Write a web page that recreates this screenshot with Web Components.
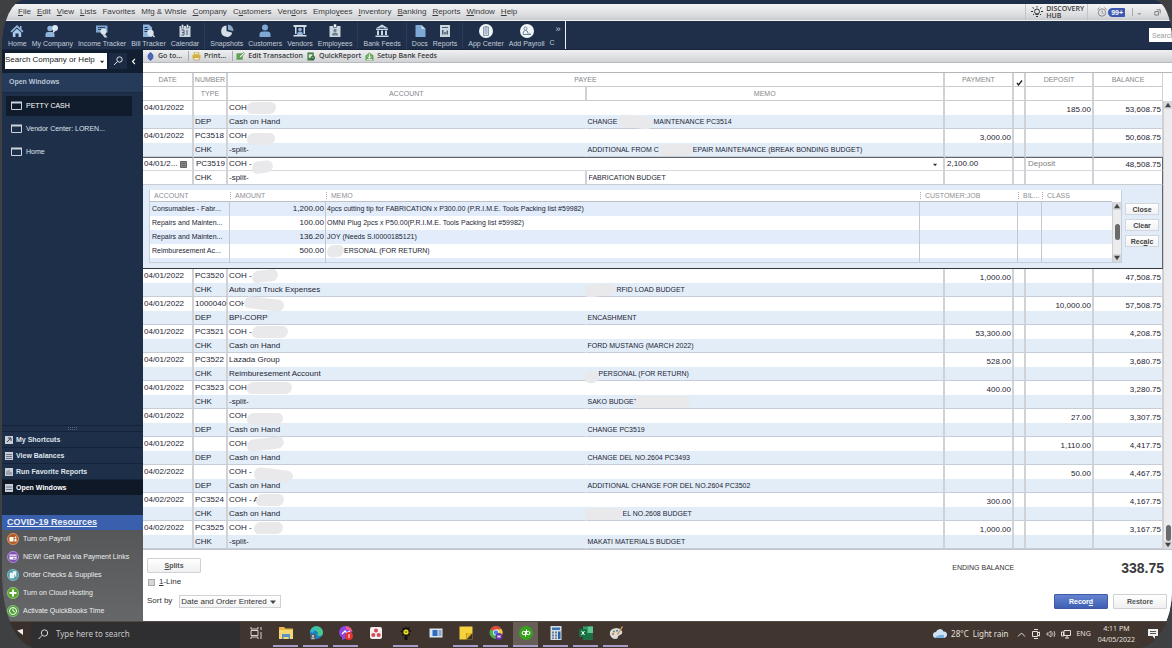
<!DOCTYPE html>
<html lang="en">
<head>
<meta charset="utf-8">
<title>Petty Cash Register</title>
<style>
html{height:100%}
body{margin:0;min-height:100%;display:flex;background:#3f4042;font-family:"Liberation Sans",Arial,sans-serif;font-size:8px;line-height:10px;color:#1c2433}
</style>
</head>
<body>
<desk-top></desk-top>
<script>
const RESET = `*{box-sizing:border-box}button,input,select{font:inherit;color:inherit;margin:0;padding:0;border:0;background:none;border-radius:0;min-width:0}a{color:inherit;text-decoration:none}svg{display:block;flex:none}`;
function define(name, css, html) {
  customElements.define(name, class extends HTMLElement {
    constructor() {
      super();
      const body = typeof html === 'function' ? html(this) : html;
      this.attachShadow({mode: 'open'}).innerHTML = `<style>${RESET}${css}</style>${body}`;
    }
  });
}

const svg = (body, size = 14, box = 14) => `<svg width="${size}" height="${size}" viewBox="0 0 ${box} ${box}" aria-hidden="true">${body}</svg>`;
const TOOLS = {
  home: '<path d="M7 1 0.5 7.2l1.2 1.2L7 3.6l5.300 4.800 1.200-1.200L11.500 5.300V2H10v1.800z" fill="#8fb4dc"/><path d="M2.800 8.500 7 4.800l4.200 3.700V13H8.500V9.500h-3V13H2.800z" fill="#a9c8e8"/>',
  company: '<circle cx="5" cy="4.500" r="2.700" fill="#8fb4dc"/><path d="M0.500 13V10q0-2 2.500-2h4q2.500 0 2.500 2v3z" fill="#8fb4dc"/><circle cx="10" cy="4" r="3" fill="#dbe7f2"/><path d="m8 6 0 3 2.500-2z" fill="#dbe7f2"/>',
  income: '<path d="M1 1.500h11.500v7H1z" fill="#7fa6d2"/><path d="M3 3h7v1H3zm0 2h5v1H3z" fill="#2c4668"/><circle cx="8.500" cy="7.500" r="3" fill="#dbe3ea"/><path d="m10 10 2.500 3.500H9.500L7 10z" fill="#c5d0da"/>',
  bill: '<path d="M2 0.500h6l3 3V13H2z" fill="#8fb4dc"/><path d="M3.500 3h3v1h-3zm0 2h4v1h-4zm0 2h3v1h-3z" fill="#23395a"/><circle cx="9.500" cy="9" r="3.200" fill="#dbe3ea"/><path d="m11.500 11 2 2" stroke="#dbe3ea" stroke-width="1.500"/>',
  calendar: '<path d="M1.500 2h11v11h-11z" fill="#cbd5dd"/><path d="M3.500.5h2V4h-2zm5 0h2V4h-2z" fill="#e8edf1" stroke="#23395a" stroke-width=".5"/><path d="M3.500 6H6v5H3.500M4 8.500h2M9 6v5" stroke="#4a5d74" fill="none"/>',
  pie: '<path d="M6.500 1.500a5.700 5.700 0 1 0 5.800 7.300L6.500 7z" fill="#d5dee6"/><path d="M8 0.500V5.800l5.200 1.400A5.700 5.700 0 0 0 8 .5z" fill="#8ba7c6"/>',
  person: '<circle cx="7" cy="3.500" r="3" fill="#7ea9d6"/><path d="M1.500 13V10.500Q1.500 7.500 5 7.500h4q3.500 0 3.500 3V13z" fill="#7ea9d6"/>',
  vendor: '<path d="M.5 1h13v2h-13zM2 3h1.500v7H2zm8.500 0H12v7h-1.500zM.5 11h13v1.500H.5z" fill="#d5dee6"/><circle cx="7" cy="5.500" r="1.800" fill="#8fb4dc"/><path d="M4 11q0-3.500 3-3.500t3 3.500z" fill="#8fb4dc"/>',
  badge: '<path d="M1.500 2h11v11h-11z" fill="#cbd5dd"/><path d="M5.500 0h3v3.500h-3z" fill="#eef2f5" stroke="#23395a" stroke-width=".6"/><circle cx="7" cy="6.500" r="1.700" fill="#6e8096"/><path d="M4 11.500q0-3 3-3t3 3z" fill="#6e8096"/>',
  bank: '<path d="M7 0.500 13.500 4.500H.5zM1 5h12v1H1zM2 6.500h2V11H2zm4 0h2V11H6zm4 0h2V11h-2zM.5 11.500h13V13H.5z" fill="#c8d7e6"/><path d="M5 3.500h4v1H5z" fill="#23395a"/>',
  doc: '<path d="M2.500 1h6l4 4v8h-10z" fill="#7ea9d6"/><path d="M8.500 1v4h4z" fill="#c8daee"/>',
  report: '<path d="M2 1h10v12H2z" fill="#cbd5dd"/><path d="M4 3h6v1H4zm0 3h1.500v4.500H4zm2.300 2h1.500v2.500H6.300zM8.500 6.500H10v4H8.500z" fill="#4a5d74"/>',
  app: '<circle cx="7" cy="7" r="7" fill="#f1f5f8"/><path d="M4.500 3h5v8.500h-5z" fill="#d3dde7" stroke="#6d87a1" stroke-width=".8"/><path d="M5.500 5h3m-3 2h3m-3 2h3M6 2.500h2" stroke="#6d87a1" stroke-width=".8"/>',
  payroll: '<circle cx="7" cy="7" r="7" fill="#f1f5f8"/><circle cx="5.500" cy="4.500" r="1.500" fill="none" stroke="#6d87a1"/><path d="M3 10q0-3.500 2.500-3.500T8 9M7 10h4M3 10.500h8" stroke="#6d87a1" fill="none"/>'
};

define('menu-bar', `
:host{display:flex;align-items:center;height:17px;padding:0 10px 0 16px;background:linear-gradient(#f4f4f5,#d9dadd 75%,#c9cbcf);border-bottom:1px solid #eef0f2;color:#3a3a3c}
nav{display:flex;gap:6px;flex:1}a{white-space:nowrap}
.right{display:flex;align-items:center;gap:5px;height:100%}
.hub{display:flex;align-items:center;gap:3px;padding:0 3px 0 5px;border-left:1px solid #c4c4c8;border-right:1px solid #c4c4c8;height:100%;font:600 7px/7px "Open Sans",sans-serif;text-align:left}
.hub span{display:block}
.alarm{display:flex;align-items:center;gap:1px;padding-left:4px}
b{background:#3c58b0;color:#fff;font-size:7px;line-height:9px;padding:0 2px 0 3px;border-radius:5px 1px 1px 5px}
.win{display:flex;gap:10px;margin-left:2px;padding-left:4px;border-left:1px solid #aaa}`,
`<nav>${['_File','_Edit','_View','_Lists','Favorites','Mfg & Whsle','_Company','C_ustomers','Ven_dors','Emplo_yees','_Inventory','_Banking','_Reports','_Window','_Help'].map(t => `<a href="#">${t.replace('&','&amp;').replace(/_(.)/,'<u>$1</u>')}</a>`).join('')}</nav>
<div class="right"><button class="hub">${svg('<circle cx="6" cy="5.500" r="2.500" fill="none" stroke="#333"/><path d="M4.500 8.500h3M5 10.500h2M6 0v1.500M0 5.500h2m8 0h2M1.500 1.500l1.500 1m7.500-1-1.500 1M2 9l1-1m7 1-1-1" stroke="#333"/>',12,12)}<span><span>DISCOVERY</span><span>HUB</span></span></button>
<div class="alarm">${svg('<circle cx="5" cy="5.500" r="3.700" fill="none" stroke="#777" stroke-width=".8"/><path d="M5 3.500v2l1.500 1M.5 2.500l2-2m7 2-2-2" fill="none" stroke="#777" stroke-width=".8"/>',10,10)}<b>99+</b></div>
<div class="win">${svg('<path d="M1 7.500h4" stroke="#666"/>',7,9)}${svg('<path d="M1 4h4v4H1zM3 2h4v4" fill="none" stroke="#777"/>',8,9)}</div></div>`);

define('tool-item', `
:host{display:block}
button{display:flex;flex-direction:column;align-items:center;gap:1px;font-size:7px;line-height:9px;color:#c3ccd8;white-space:nowrap}`,
el => `<button>${svg(TOOLS[el.getAttribute('icon')])}<span><slot></slot></span></button>`);

define('icon-bar', `
:host{display:flex;height:29px;background:#1f2f49;border-bottom:1px solid #17253b}
nav{display:flex;align-items:center;gap:5px;padding:1px 4px 0 6px;border-right:1px solid #eef1f5;color:#c3ccd8;font-size:7px}
hr{align-self:stretch;width:1px;margin:0;border:0;background:#2a3c58}
.more{display:grid;gap:4px;line-height:9px;color:inherit}.more span:first-child{text-align:right;padding-left:6px;font-size:9px}
.more span:last-child{text-align:left}
.find{margin-left:auto;align-self:center;width:23px;height:14px;background:#fff;padding-left:3px;font-size:7px}
::placeholder{color:#9a9a9a;opacity:1}`,
`<nav><tool-item icon="home">Home</tool-item><tool-item icon="company">My Company</tool-item><tool-item icon="income">Income Tracker</tool-item><tool-item icon="bill">Bill Tracker</tool-item><tool-item icon="calendar">Calendar</tool-item><hr><tool-item icon="pie">Snapshots</tool-item><tool-item icon="person">Customers</tool-item><tool-item icon="vendor">Vendors</tool-item><tool-item icon="badge">Employees</tool-item><hr><tool-item icon="bank">Bank Feeds</tool-item><hr><tool-item icon="doc">Docs</tool-item><tool-item icon="report">Reports</tool-item><hr><tool-item icon="app">App Center</tool-item><tool-item icon="payroll">Add Payroll</tool-item><button class="more"><span>»</span><span>C</span></button></nav>
<input class="find" placeholder="Search" aria-label="Search">`);

const promo = (c, d, t) => `<li><a href="#">${svg(`<circle cx="6" cy="6" r="6" fill="${c}"/><circle cx="6" cy="6" r="5.500" fill="none" stroke="#fff" stroke-opacity=".35"/>${d}`,12,12)}${t}</a></li>`;
const shortcut = (t, d, on = '') => `<li class="${on}"><button>${svg(`<path d="M0 0h8v8H0z" fill="#c9ced6"/>${d}`,8,8)}${t}</button></li>`;
define('side-bar', `
:host{display:flex;flex-direction:column;width:141px;flex:none;background:#1e2f49;color:#dfe4ec}
ul{list-style:none;margin:0;padding:0}
.search{display:flex;align-items:flex-start;background:#121e31;padding:3px 5px 4px 3px}
.box{display:flex;width:102px;height:16px;background:#fff;align-items:center;color:#222}
.box input{flex:1;align-self:flex-start;height:12px}::placeholder{color:#222;opacity:1}
.box svg{margin-right:2px}
.search button{height:16px}.go{width:18px;padding-left:4px;background:#1c2b43;margin-left:2px}.fold{margin-left:auto}
h2{margin:0;padding:4px 7px 5px;line-height:10px;background:#263a5a;border-bottom:1px solid #1a2940;color:#b9c3d2;font-size:7px}
.open{padding:3px 11px 0 4px;flex:1;font-size:7px}
.open li{margin-bottom:3px}
.open button{display:flex;align-items:center;gap:4px;width:100%;height:20px;padding-left:5px;text-align:left}
.open .on{background:#101b2b;color:#fff}
.grip{display:flex;justify-content:center;padding:1px;border-top:1px solid #14213a}
.cuts li{border-top:1px solid #15233a}.cuts button{display:flex;align-items:center;gap:3px;height:15px;padding-left:3px;font-weight:bold;font-size:7px}
.cuts .on{background:#0f1827;color:#fff}.cuts{padding-bottom:20px}
h3{margin:0;background:#3a60ad;font-size:9px;line-height:15px;padding-left:5px;color:#eaf0fb}h3 a{text-decoration:underline}
.promo{background:linear-gradient(#565758,#666768);padding:0 4px 1px;font-size:7px;color:#eceef0}
.promo a{display:flex;align-items:center;gap:4px;height:18px;padding-left:1px;white-space:nowrap}`,
`<div class="search"><label class="box"><input placeholder="Search Company or Help" aria-label="Search Company or Help">${svg('<path d="M0 2h5L2.500 5z" fill="#333"/>',5,6)}</label><button class="go" aria-label="Find">${svg('<circle cx="6.500" cy="3.500" r="2.700" fill="none" stroke="#dfe4ec"/><path d="M4.500 5.500 1 9" stroke="#dfe4ec"/>',10,10)}</button><button class="fold" aria-label="Collapse">${svg('<path d="M5 1 2 4.500 5 8" fill="none" stroke="#fff" stroke-width="1.500"/>',7,9)}</button></div>
<h2>Open Windows</h2>
<ul class="open">${['PETTY CASH','Vendor Center: LOREN...','Home'].map((t,i) => `<li><button class="${i ? '' : 'on'}">${svg('<path d="M.5 1.500h10v7H.5z" fill="none" stroke="#cdd4de"/><path d="M0 1.500h11" stroke="#cdd4de" stroke-width="2"/>',11,11)}${t}</button></li>`).join('')}</ul>
<div class="grip"><svg width="10" height="3" viewBox="0 0 10 3" aria-hidden="true"><path d="M0 .5h10M0 2.500h10" stroke="#52637d" stroke-dasharray="1 1"/></svg></div>
<ul class="cuts">${shortcut('My Shortcuts','<path d="M2 6 6 2M3 2h3v3" stroke="#33435c" fill="none"/>')}${shortcut('View Balances','<path d="M1 2.500h6M1 4.500h6M1 6.500h6" stroke="#66748a"/>')}${shortcut('Run Favorite Reports','<path d="M2 7V3m2 4V2m2 5V4" stroke="#66748a"/>')}${shortcut('Open Windows','<path d="M1 3h6M1 5.500h6" stroke="#66748a"/>','on')}</ul>
<h3><a href="#">COVID-19 Resources</a></h3>
<ul class="promo">${promo('#b55a22','<path d="M2.500 4h4v4.500h-4zm1.500 1h1v2.500H4zM7.500 6h2v2.500h-2z" fill="#fff"/><circle cx="8.500" cy="4.500" r="1" fill="#fff"/>','Turn on Payroll')}${promo('#7c4fb0','<path d="M2.500 3.500h7v5h-7z" fill="#fff"/><path d="M2.500 5.200h7M6 7.200h2.500" stroke="#7c4fb0"/>','NEW! Get Paid via Payment Links')}${promo('#4796a8','<path d="M3 4h4v5H3zM5.500 2.500h3.500V8" fill="#e6f4f7" stroke="#fff" stroke-width=".6"/>','Order Checks &amp; Supplies')}${promo('#56a32c','<path d="M6 2.500v7M2.500 6h7" stroke="#fff" stroke-width="2"/>','Turn on Cloud Hosting')}${promo('#4b9c33','<circle cx="6" cy="6" r="3.500" fill="none" stroke="#fff"/><path d="M6 3.500V6l2 1" stroke="#fff" fill="none"/>','Activate QuickBooks Time')}</ul>`);

define('action-bar', `
:host{display:flex;align-items:center;height:13px;background:linear-gradient(#f0f0f1,#d2d3d6);border-bottom:1px solid #b9babd;padding-left:3px;font:600 7px/10px "Open Sans",sans-serif;color:#3a3b3e}
button{display:flex;align-items:center;gap:3px;height:10px;padding:0 4px 0 0;white-space:nowrap}
.s{padding-right:6px;border-right:1px solid #a9aaad;margin-right:3px}`,
[['s','Go to...','<path d="M5 0 8 3H6.500v4H8l-3 3-3-3h1.500V3H2z" fill="#3b59a8"/><circle cx="5" cy="5" r="3.300" fill="#4c68b4"/>'],
 ['s','Print...','<path d="M2.500 0h5v3h-5z" fill="#efe6b0" stroke="#a48a2c" stroke-width=".6"/><path d="M.5 3h9v4h-9z" fill="#d9b23c"/><path d="M2 6h6v3H2z" fill="#f7efc8" stroke="#a48a2c" stroke-width=".6"/>'],
 ['','Edit Transaction','<path d="M.5 1.500h7v7h-7z" fill="#5ea653"/><path d="m3 7 1-2.500L8.500.5l1.200 1.200L5.500 6z" fill="#e8f3e4" stroke="#2f6b2a" stroke-width=".6"/>'],
 ['','QuickReport','<path d="M.5.5h7v9h-7z" fill="#41804a"/><path d="M2 2.500h4v4H2z" fill="#dcebd9"/><circle cx="6.500" cy="6.500" r="2" fill="none" stroke="#224f28"/>'],
 ['','Setup Bank Feeds','<path d="M.5 4 5 .5 9.500 4v5.500h-9z" fill="#67a85d"/><path d="M5 2v5M3 5l2 2 2-2M2 8.500h6" stroke="#fff" fill="none"/>']]
 .map(([c,t,d]) => `<button class="${c}">${svg(d,9,10)}${t}</button>`).join(''));

define('scroll-rail', `
:host{display:flex;flex-direction:column;align-items:center;width:9px;background:#ececee;border-left:1px solid #cfcfd2}
i{width:5px;border-radius:3px;background:#6b6b6e;margin-top:auto;height:16px}i.mid{margin-bottom:auto}
svg{background:#d9d9dc;padding:1px}`,
el => `${svg('<path d="M0 6 3.500 1 7 6z" fill="#444"/>',8,7)}<i class="${el.getAttribute('at') || ''}"></i>${svg('<path d="M0 1h7L3.500 6z" fill="#444"/>',8,7)}`);

const blob = (w, cls = '') => `<s class="${cls}" style="--w:${w}px"></s>`;
const BLOB = `s{display:inline-block;position:relative;width:var(--w);height:12px;margin:-2px 0;vertical-align:middle;border-radius:7px 6px 7px 5px;background:#e9e9eb;z-index:1}s.low{top:3px}s.back{margin-left:-3px}s.tilt{transform:rotate(-7deg)}s.drop{transform:rotate(7deg)}`;
const SPLITS = [['Consumables - Fabr...','1,200.00','4pcs cutting tip for FABRICATION x P300.00 (P.R.I.M.E. Tools Packing list #59982)'],['Repairs and Mainten...','100.00','OMNI Plug 2pcs x P50.00(P.R.I.M.E. Tools Packing list #59982)'],['Repairs and Mainten...','136.20','JOY (Needs S.I0000185121)'],['Reimburesement Ac...','500.00',blob(17,'tilt')+'ERSONAL (FOR RETURN)'],['','','']];
define('split-panel', `${BLOB}
:host{display:flex;gap:3px;height:83px;padding:5px 3px 5px 6px;background:#e2ebf8}
.grid{flex:1;min-width:0;display:grid;grid-template-columns:1fr 9px;grid-template-rows:12px 1fr;overflow:hidden;border:1px solid #c6cedb;border-top:0;background:#fff}
.view{grid-column:1;grid-row:1/3;overflow:hidden}scroll-rail{grid-column:2;grid-row:2}
table{width:100%;table-layout:fixed;border-spacing:0;white-space:nowrap}
th{height:12px;padding:0 0 0 4px;text-align:left;font-weight:normal;font-size:7px;line-height:10px;color:#8d8f94;border-bottom:1px solid #bcc0c7;background:#fff}
th+th::before{content:"";border-left:1px dotted #aaa;margin:0 4px 0 -4px}
td{height:14px;padding:0 1px 1px 2px;line-height:12px;border-right:1px solid #c3c8d0}
td:first-child{font-size:7px}
td:last-child{border-right:0}
tr:nth-child(odd) td{background:#e2ecfa}.n{text-align:right}
td.m{padding-left:1px;font-size:7px}
.acts{display:flex;flex-direction:column;gap:4px;width:34px;padding-top:13px;flex:none}
.acts button{height:12px;background:linear-gradient(#fff,#f0f1f3);border:1px solid #d2d6dd;line-height:9px;color:#444;font-weight:bold;font-size:7px}`,
`<div class="grid"><div class="view"><table><colgroup><col style="width:80px"><col style="width:96px"><col><col style="width:98px"><col style="width:24px"><col style="width:70px"></colgroup>
<thead><tr><th>ACCOUNT</th><th>AMOUNT</th><th>MEMO</th><th>CUSTOMER:JOB</th><th>BIL...</th><th>CLASS</th></tr></thead>
<tbody>${SPLITS.map(r => `<tr><td>${r[0]}</td><td class="n">${r[1]}</td><td class="m">${r[2]}</td><td></td><td></td><td></td></tr>`).join('')}</tbody></table></div><scroll-rail at="mid"></scroll-rail></div>
<div class="acts"><button>Close</button><button>Clear</button><button>Rec<u>a</u>lc</button></div>`);

const ROWS = [
 ['04/01/2022','','COH'+blob(29),'','185.00','53,608.75','DEP','Cash on Hand','CHANGE '+blob(34,'drop')+'MAINTENANCE PC3514'],
 ['04/01/2022','PC3518','COH'+blob(28,'low'),'3,000.00','','50,608.75','CHK','-split-','ADDITIONAL FROM C'+blob(34)+'EPAIR MAINTENANCE (BREAK BONDING BUDGET)'],
 null,
 ['04/01/2022','PC3520','COH -'+blob(26,'tilt'),'1,000.00','','47,508.75','CHK','Auto and Truck Expenses',blob(30,'tilt back')+'&nbsp;RFID LOAD BUDGET'],
 ['04/01/2022','1000040','COH'+blob(40,'drop back'),'','10,000.00','57,508.75','DEP','BPI-CORP','ENCASHMENT'],
 ['04/01/2022','PC3521','COH -'+blob(36),'53,300.00','','4,208.75','CHK','Cash on Hand','FORD MUSTANG (MARCH 2022)'],
 ['04/01/2022','PC3522','Lazada Group','528.00','','3,680.75','CHK','Reimburesement Account',blob(14,'tilt back low')+'PERSONAL (FOR RETURN)'],
 ['04/01/2022','PC3523','COH'+blob(45),'400.00','','3,280.75','CHK','-split-','SAKO BUDGET'+blob(55,'back')],
 ['04/01/2022','','COH'+blob(36,'low'),'','27.00','3,307.75','DEP','Cash on Hand','CHANGE PC3519'],
 ['04/01/2022','','COH'+blob(37,'tilt'),'','1,110.00','4,417.75','DEP','Cash on Hand','CHANGE DEL NO.2604 PC3493'],
 ['04/02/2022','','COH - '+blob(39,'drop low'),'','50.00','4,467.75','DEP','Cash on Hand','ADDITIONAL CHANGE FOR DEL NO.2604 PC3502'],
 ['04/02/2022','PC3524','COH - A'+blob(28,'back'),'300.00','','4,167.75','CHK','Cash on Hand',blob(38,'back')+'EL NO.2608 BUDGET'],
 ['04/02/2022','PC3525','COH - '+blob(29),'1,000.00','','3,167.75','CHK','-split-','MAKATI MATERIALS BUDGET']];
const editRow = `
<tr class="a e"><td><span class="cell"><input class="dt" value="04/01/2..." aria-label="Date">${svg('<path d="M.5.5h6v6h-6z" fill="#888" stroke="#666"/><path d="M2 2.500h3M2 4.500h3" stroke="#666"/>',7,7)}</span></td><td><input value="PC3519" aria-label="Number"></td><td colspan="2"><span class="cell"><span>COH -${blob(21,'tilt low')}</span>${svg('<path d="M0 2h5L2.500 5z" fill="#333"/>',5,6)}</span></td><td><input value="2,100.00" aria-label="Payment"></td><td></td><td><input placeholder="Deposit" aria-label="Deposit"></td><td class="n r">48,508.75</td></tr>
<tr class="w"><td></td><td>CHK</td><td>-split-</td><td class="m"><input value="FABRICATION BUDGET" aria-label="Memo"></td><td></td><td></td><td></td><td class="r"></td></tr>
<tr><td colspan="8" class="panel"><split-panel></split-panel></td></tr>`;
define('check-register', `${BLOB}
:host{display:grid;grid-template-columns:minmax(0,1fr) 9px;grid-template-rows:28px 1fr;margin-top:9px;border-top:1px solid #b4b6ba;border-bottom:1px solid #c0c5cc;background:#fff}
table{grid-column:1;grid-row:1/3;width:100%;table-layout:fixed;border-spacing:0;white-space:nowrap}
scroll-rail{grid-column:2;grid-row:2}
th{height:14px;padding:0;font-weight:normal;font-size:7px;line-height:12px;vertical-align:bottom;color:#85878b;border-right:2px solid #cfd1d4;border-bottom:1px solid #c9cbce}
td{height:14px;padding:0 1px;line-height:13px;border-right:2px solid #d0d2d6}
th:last-child,td:last-child{border-right-width:1px}
td:nth-child(2){padding-left:1px}
.a td,.w td{background:#fff;vertical-align:top}.b td{background:#e3edf8;border-bottom:1px solid #c6cdd6}
.b td:nth-child(3){border-right-color:transparent}
.a td.n{text-align:right;line-height:10px;vertical-align:bottom}
.m{font-size:7px}
.e td{border-top:1px solid #60656c;border-bottom:1px solid #d5d8dc;line-height:12px}.w td{border-bottom:1px solid #c9ccd1}
.r{border-right-color:#60656c!important}
td.panel{padding:0;border-right:1px solid #60656c;border-bottom:1px solid #33373d}
input{display:block;width:100%;height:12px}td>input{padding-left:1px}::placeholder{color:#808080;opacity:1}.cell{display:flex;align-items:center;justify-content:space-between;padding-right:4px;height:12px}.cell .dt{width:34px}
th svg{margin:auto}`,
`<table><colgroup><col style="width:51px"><col style="width:34px"><col><col><col style="width:69px"><col style="width:12px"><col style="width:68px"><col style="width:69px"></colgroup>
<thead><tr><th>DATE</th><th>NUMBER</th><th colspan="2">PAYEE</th><th>PAYMENT</th><th aria-label="Cleared">${svg('<path d="m1 4 1.500 2L6 1.500" fill="none" stroke="#222" stroke-width="1.300"/>',7,7)}</th><th>DEPOSIT</th><th>BALANCE</th></tr>
<tr><th></th><th>TYPE</th><th>ACCOUNT</th><th>MEMO</th><th></th><th></th><th></th><th></th></tr></thead>
<tbody>${ROWS.map(r => r ? `<tr class="a"><td>${r[0]}</td><td>${r[1]}</td><td colspan="2">${r[2]}</td><td class="n">${r[3]}</td><td></td><td class="n">${r[4]}</td><td class="n">${r[5]}</td></tr><tr class="b"><td></td><td>${r[6]}</td><td>${r[7]}</td><td class="m">${r[8]}</td><td></td><td></td><td></td><td></td></tr>` : editRow).join('')}</tbody></table><scroll-rail></scroll-rail>`);

define('register-footer', `
:host{display:flex;justify-content:space-between;flex:1;background:#fff;padding:8px 5px 10px 4px;color:#333}
.left{display:flex;flex-direction:column;align-items:flex-start;gap:4px}
button{width:54px;height:15px;background:linear-gradient(#fff,#f0f0f2);border:1px solid #d0d1d4;border-radius:1px;font-weight:bold;font-size:7px;color:#555}
.left label{display:flex;align-items:center;gap:4px}
[type=checkbox]{appearance:none;width:7px;height:7px;border:1px solid #aaa;background:#d6d6d8;margin-left:1px}
.sort{display:flex;gap:7px;margin-top:3px}
.pick{display:grid;align-items:center;width:102px;height:13px;border:1px solid #d0d1d4;background:linear-gradient(#fff,#f3f3f4);margin-top:1px}
.pick>*{grid-area:1/1}.pick svg{justify-self:end;margin-right:4px;pointer-events:none}
select{appearance:none;width:100%;padding-left:1px}
.right{display:flex;flex-direction:column;justify-content:space-between;align-items:flex-end;padding-bottom:2px}
dl{display:flex;align-items:center;gap:107px;margin:0;font-size:7px;padding:2px 3px 0 0}
dd{margin:0;font:bold 14px/16px "Liberation Sans",sans-serif;color:#3a3b3e}
.go{display:flex;gap:5px}.main{background:linear-gradient(#6484d0,#3f5fb4);border-color:#3f5ba6;color:#fff}`,
`<div class="left"><button><u>S</u>plits</button><label><input type="checkbox"><span><u>1</u>-Line</span></label><div class="sort"><label for="sort">Sort by</label><span class="pick"><select id="sort"><option>Date and Order Entered</option></select>${svg('<path d="M0 1.500h6l-3 3.500z" fill="#444"/>',6,6)}</span></div></div>
<div class="right"><dl><dt>ENDING BALANCE</dt><dd>338.75</dd></dl><div class="go"><button class="main">Recor<u>d</u></button><button>Restore</button></div></div>`);

const APPS = [
 ['Task View','<path d="M2 1v2h7V1M2 13v-2h7v2M2 4.500h7v5H2zM12 1v3m0 2v7" fill="none" stroke="#d8d5d3"/>',''],
 ['File Explorer','<path d="M0 1h5l1.500 1.500H14V12H0z" fill="#e9b84b"/><path d="M0 4h14v9H0z" fill="#f7d774"/><path d="M3 8h8v5H9.500v-2h-5v2H3z" fill="#5b93c8"/>','u'],
 ['Edge','<circle cx="7.500" cy="6.500" r="6.500" fill="#1b7fc3"/><path d="M1 7a6.500 6.500 0 0 1 13-.5q0 3.500-3.500 3.500T9 7Q8 4 5 4.500T1 7z" fill="#48c98b"/><path d="M1.500 5Q5 0 10 3q-5 0-6 4z" fill="#35b7d8"/><circle cx="4" cy="11" r="3" fill="#53606c"/><circle cx="4" cy="10" r="1" fill="#ddd"/><path d="M2 12.800q2-2.500 4 0z" fill="#ddd"/>','u'],
 ['Messenger','<path d="M7 0a6.500 6.300 0 0 1 0 12.500L3 14v-2.500A6.500 6.300 0 0 1 7 0z" fill="#8d45e8"/><path d="M7 0a6.500 6.300 0 0 1 6.500 6L7 3z" fill="#ef5b83"/><path d="m3 8 3-3 2 2 3-2" stroke="#fff" stroke-width="1.300" fill="none"/><circle cx="10" cy="10" r="4" fill="#e3342f"/><path d="M10 8v4" stroke="#fff"/>','u'],
 ['Asana','<rect x="1" y="1" width="12" height="12" rx="2" fill="#f4efef"/><circle cx="7" cy="4.500" r="2" fill="#d5495b"/><circle cx="4.300" cy="9" r="2" fill="#d5495b"/><circle cx="9.700" cy="9" r="2" fill="#d5495b"/>',''],
 ['Bulb','<path d="M7 0l1 2 3-1-1 3 3 1-3 1.500L11 10 8.500 9v5h-3V9L3 10l1-3L1 5.500 4 4 3 1.500 6 2z" fill="#15130f"/><circle cx="7" cy="6" r="2.600" fill="#f5e51b"/><path d="m6 5 1 2 1-2" stroke="#333" fill="none" stroke-width=".6"/>','u'],
 ['Remote','<path d="M.5 2.500h13v9H.5z" fill="#dbe5ef"/><path d="M3.500 4h5v6h-5z" fill="#2e6cc0"/><path d="M9.500 4h3v6h-3z" fill="#8da9cc"/>',''],
 ['Sticky Notes','<path d="M.5.5h13v13H.5z" fill="#f7d23e"/><path d="M7.500 7h6v6.500h-6z" fill="#3c3327"/><path d="M7.500 13.500 13.500 7H7.500z" fill="#e8b920"/>','u'],
 ['Chrome','<circle cx="7" cy="6.500" r="6.500" fill="#4caf50"/><path d="M1.400 3.200A6.500 6.500 0 0 1 12.600 3.300L7 6.500z" fill="#e5463a"/><path d="M12.600 3.200A6.500 6.500 0 0 1 8 13L7 6.500V3.500z" fill="#f6c94a"/><circle cx="7" cy="6.500" r="3" fill="#fff"/><circle cx="7" cy="6.500" r="2.300" fill="#4a86e8"/><circle cx="10" cy="10.500" r="3.500" fill="#6a2fa0"/><path d="M9 9v3m2-3v3M9 10.500h2" stroke="#fff" stroke-width=".8"/>','u'],
 ['QuickBooks','<circle cx="7" cy="7" r="7" fill="#38a01f"/><circle cx="4.800" cy="7" r="1.700" fill="none" stroke="#fff"/><circle cx="9.200" cy="7" r="1.700" fill="none" stroke="#fff"/><path d="M6.500 5v5.500M7.500 3.500v5" stroke="#fff"/>','u on'],
 ['Calculator','<path d="M1.500 0h11v14h-11z" fill="#d5dde5"/><path d="M3 1.500h8v2.500H3z" fill="#3b78b5"/><path d="M3 5.500h2v2H3zm3 0h2v2H6zm-3 3h2v2H3zm3 0h2v2H6zm-3 3h2v1.500H3zm3 0h2v1.500H6z" fill="#6b8299"/><path d="M9 5.500h2.500V13H9z" fill="#2864a3"/>','u'],
 ['Excel','<path d="M4 .5h10v13H4z" fill="#33a36b"/><path d="M9 .5h5v6.500H9z" fill="#5fc593"/><path d="M9 7h5v6.500H4V10z" fill="#1c6e43"/><path d="M0 3h8v8H0z" fill="#15733f"/><path d="m2.500 5 3 4m0-4-3 4" stroke="#fff"/>','u'],
 ['Paint','<path d="M1 9q-1-5 4-6.500T13 5q1 3-2 4t-2 3q-5 3-8-3z" fill="#dcdad5"/><circle cx="4" cy="8" r="1" fill="#c9653d"/><circle cx="5" cy="5.500" r="1" fill="#5a8f48"/><circle cx="8" cy="4.800" r="1" fill="#417cb8"/><path d="m8 8 5-8 1 1-5 8z" fill="#c89b5a"/>','u']];
define('task-bar', `
:host{display:flex;align-items:stretch;height:27px;background:#41352f;font:8px/12px "Noto Sans",sans-serif;color:#e4e1df;border-top:1px solid #564a44}
.start{display:flex;width:29px;padding:7px 0 0 15px;background:#3a302b}
.search{display:flex;align-items:center;gap:7px;width:209px;background:#2f2e30;padding:0 0 2px 7px;color:#c8c8ca}.search input{flex:1}::placeholder{color:#c8c8ca;opacity:1}
.apps{display:flex;gap:5px;padding-left:3px}
.apps button{display:flex;flex-direction:column;align-items:center;width:25px;padding:4px 0 1px;height:25px}
.apps .u{box-shadow:inset 0 -2px #a79fcb}.apps .on{background:#685e58}
.tray{margin-left:auto;display:flex;align-items:center;gap:5px;padding:0 14px 2px 0;white-space:nowrap}
.w{display:flex;gap:4px;align-items:center;padding-right:4px}
.k{font-size:7px}
time{font-size:7px;line-height:11px;text-align:center;padding:0 8px 0 2px}`,
`<button class="start" aria-label="Start">${svg('<path d="M0 1.500 6 0v6z" fill="#eee"/>',7,7)}</button>
<label class="search">${svg('<circle cx="6.500" cy="4" r="3.200" fill="none" stroke="#d8d8d8"/><path d="M4 6.500.5 10" stroke="#d8d8d8"/>',11,11)}<input placeholder="Type here to search" aria-label="Type here to search"></label>
<div class="apps">${APPS.map(([n,d,c]) => `<button class="${c}" aria-label="${n}">${svg(d)}</button>`).join('')}</div>
<div class="tray"><span class="w">${svg('<path d="M3 11a3 3 0 0 1 0-6 4 4 0 0 1 7.500-.5A3.200 3.200 0 0 1 11 11z" fill="#cfe4f5"/><path d="M2 10q5-3 9-2l0 3H3z" fill="#78b3e2"/>',14,14)}<span>28°C</span><span>Light rain</span></span>
${svg('<path d="m1 6.500 3.500-3.500L8 6.500" fill="none" stroke="#e4e1df"/>',9,9)}${svg('<path d="M3 .5h4M3 9.500h4M1.500 2.500h5v5h-5zM6.500 4l2-1v4l-2-1" fill="none" stroke="#e4e1df"/>',10,10)}${svg('<path d="M1 4h1.500L5 2v6L2.500 6H1zM6.500 3.500q1 1.500 0 3M8 2q2 3 0 6" fill="none" stroke="#e4e1df" stroke-width=".8"/>',10,10)}${svg('<path d="M3 1.500h6.500v5H3zM6 6.500V9M4 9h4M.5 3h2v4h-2z" fill="none" stroke="#e4e1df"/>',10,10)}<span class="k">ENG</span><time>4:11 PM<br>04/05/2022</time>${svg('<path d="M0 0h10v7H7v3L4.500 7H0z" fill="#eee"/><path d="M2 2.500h6M2 4.500h6" stroke="#555"/>',10,10)}</div>`);

define('desk-top', `
:host{display:flex;flex-direction:column;flex:1;min-width:0;margin-left:2px;background:#1f2f4a;padding-top:4px;overflow:hidden;border-radius:22px 18px 36px 36px/48px 40px 58px 70px}
main{display:flex;flex:1}
section{display:flex;flex-direction:column;flex:1;min-width:0;background:#fff}`,
`<menu-bar></menu-bar><icon-bar></icon-bar><main><side-bar></side-bar><section><action-bar></action-bar><check-register></check-register><register-footer></register-footer></section></main><task-bar></task-bar>`);
</script>
</body>
</html>
